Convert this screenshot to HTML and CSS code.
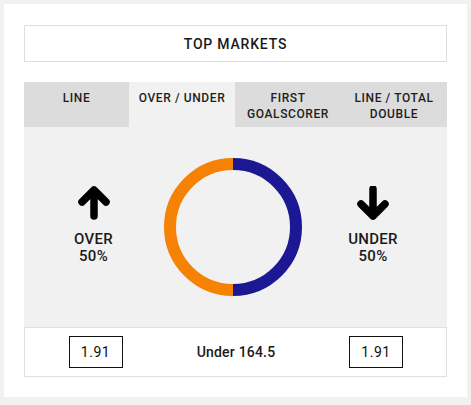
FILE: index.html
```html
<!DOCTYPE html>
<html>
<head>
<meta charset="utf-8">
<link rel="stylesheet" href="styles.css">
</head>
<body>
<div class="card">
  <div class="header">TOP MARKETS</div>
  <div class="tabs">
    <div class="tab">LINE</div>
    <div class="tab active">OVER / UNDER</div>
    <div class="tab">FIRST<br>GOALSCORER</div>
    <div class="tab">LINE / TOTAL<br>DOUBLE</div>
  </div>
  <div class="content">
    <div class="side">
      <svg class="arrow" width="34" height="34" viewBox="0 0 34 34">
        <path d="M17 30 V5 M5 16 L17 4 L29 16" fill="none" stroke="#000" stroke-width="7.5" stroke-linecap="round" stroke-linejoin="round"/>
      </svg>
      <div class="label">OVER<br>50%</div>
    </div>
    <div class="middle">
      <svg width="140" height="140" viewBox="0 0 140 140">
        <path d="M70 7 A63 63 0 0 0 70 133" fill="none" stroke="#f58205" stroke-width="12"/>
        <path d="M70 7 A63 63 0 0 1 70 133" fill="none" stroke="#1c1894" stroke-width="12"/>
      </svg>
    </div>
    <div class="side">
      <svg class="arrow" width="34" height="34" viewBox="0 0 34 34">
        <path d="M17 3 V28 M5 18 L17 30 L29 18" fill="none" stroke="#000" stroke-width="7.5" stroke-linecap="round" stroke-linejoin="round"/>
      </svg>
      <div class="label">UNDER<br>50%</div>
    </div>
  </div>
  <div class="footer">
    <div class="cell"><span class="odds">1.91</span></div>
    <div class="cell line">Under 164.5</div>
    <div class="cell"><span class="odds">1.91</span></div>
  </div>
</div>
</body>
</html>
```
FILE: styles.css
```css
html, body {
  margin: 0;
  padding: 0;
}
body {
  background: #f1f1f1;
  padding: 4px;
  font-family: Roboto, "Liberation Sans", sans-serif;
  color: #1a1a1a;
}
.card {
  background: #fff;
  width: 463px;
  height: 393px;
  box-sizing: border-box;
  padding: 21px 20px 20px;
}
.header {
  height: 37px;
  box-sizing: border-box;
  border: 1px solid #dedede;
  display: flex;
  align-items: center;
  justify-content: center;
  font-size: 14px;
  font-weight: 500;
  letter-spacing: 0.8px;
  margin-bottom: 20px;
}
.tabs {
  display: grid;
  grid-template-columns: 105px 106px 106px 106px;
  height: 45px;
  background: #dcdcdc;
}
.tab {
  text-align: center;
  font-size: 12px;
  font-weight: 500;
  letter-spacing: 0.6px;
  line-height: 16px;
  padding-top: 8px;
  color: #1e1e1e;
}
.tab.active {
  background: #f1f1f1;
}
.content {
  height: 200px;
  background: #f1f1f1;
  display: grid;
  grid-template-columns: 139px 140px 140px;
  align-items: center;
}
.side {
  display: flex;
  flex-direction: column;
  align-items: center;
  padding-bottom: 4px;
}
.arrow {
  display: block;
  margin-bottom: 11px;
}
.label {
  text-align: center;
  font-size: 15px;
  font-weight: 500;
  line-height: 17px;
  letter-spacing: 0.3px;
}
.middle {
  display: flex;
  justify-content: center;
}
.middle svg {
  display: block;
}
.footer {
  height: 50px;
  box-sizing: border-box;
  border: 1px solid #e0e0e0;
  display: grid;
  grid-template-columns: 141px 140px 140px;
  align-items: center;
}
.cell {
  display: flex;
  justify-content: center;
  font-size: 14px;
}
.line {
  font-weight: 500;
  letter-spacing: 0.2px;
}
.odds {
  width: 54px;
  height: 32px;
  box-sizing: border-box;
  border: 1px solid #111;
  display: flex;
  align-items: center;
  justify-content: center;
  letter-spacing: 0.5px;
  color: #111;
}
```
